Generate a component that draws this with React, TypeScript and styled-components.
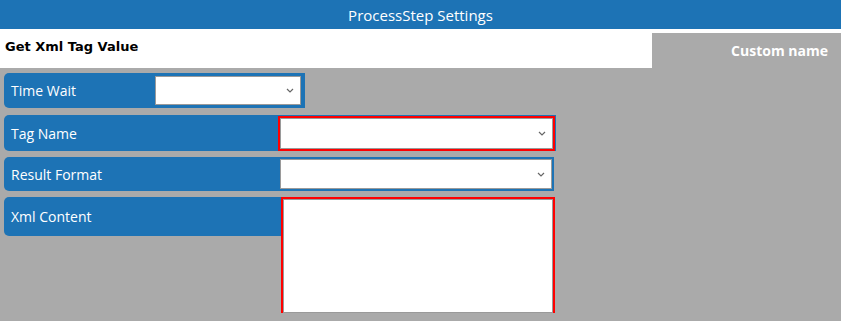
import React from 'react';
import styled, { createGlobalStyle, css } from 'styled-components';

const GlobalStyle = createGlobalStyle`
  html, body {
    margin: 0;
    padding: 0;
    background: #aaaaaa;
  }
  body {
    font-family: "Open Sans", "Noto Sans", Arial, sans-serif;
  }
`;

const BLUE = '#1d73b5';

const Header = styled.div`
  height: 29px;
  background: ${BLUE};
  color: #ffffff;
  font-size: 15px;
  display: flex;
  align-items: center;
  justify-content: center;
`;

const SubBar = styled.div`
  height: 39px;
  background: #ffffff;
  display: flex;
  justify-content: space-between;
`;

const StepTitle = styled.div`
  padding: 10px 0 0 5px;
  font-family: "DejaVu Sans", Verdana, sans-serif;
  font-weight: bold;
  font-size: 13px;
  color: #000000;
`;

const CustomName = styled.div`
  margin-top: 4px;
  width: 189px;
  background: #aaaaaa;
  color: #ffffff;
  font-weight: bold;
  font-size: 14px;
  display: flex;
  align-items: center;
  justify-content: flex-end;
  padding-right: 13px;
  box-sizing: border-box;
`;

const Form = styled.div`
  padding: 5px 0 0 4px;
  display: flex;
  flex-direction: column;
`;

const Row = styled.div<{ $gap: number }>`
  display: flex;
  align-items: flex-start;
  margin-bottom: ${(p) => p.$gap}px;
`;

const Label = styled.div<{ $width: number; $height: number }>`
  width: ${(p) => p.$width}px;
  height: ${(p) => p.$height}px;
  background: ${BLUE};
  border-radius: 5px 0 0 5px;
  color: #ffffff;
  font-size: 14px;
  display: flex;
  align-items: center;
  padding-left: 7px;
  box-sizing: border-box;
`;

const FieldCell = styled.div<{ $pad: string }>`
  background: ${BLUE};
  padding: ${(p) => p.$pad};
  display: flex;
`;

const invalid = css`
  outline: 2px solid #ff0000;
  outline-offset: 0;
`;

const Select = styled.div<{ $width: number; $height: number; $invalid?: boolean }>`
  width: ${(p) => p.$width}px;
  height: ${(p) => p.$height}px;
  background: #ffffff;
  border: 1px solid #9a9a9a;
  box-sizing: border-box;
  display: flex;
  align-items: center;
  justify-content: flex-end;
  padding-right: 6px;
  ${(p) => p.$invalid && invalid}
`;

const TextArea = styled.div`
  width: 270px;
  height: 114px;
  margin: 2px 0 0 2px;
  background: #ffffff;
  border: 1px solid #9a9a9a;
  box-sizing: border-box;
  ${invalid}
`;

const Chevron = () => (
  <svg width="8" height="5" viewBox="0 0 8 5">
    <path d="M1 1 L4 4 L7 1" fill="none" stroke="#666" strokeWidth="1.2" />
  </svg>
);

const App: React.FC = () => {
  return (
    <>
      <GlobalStyle />
      <Header>ProcessStep Settings</Header>
      <SubBar>
        <StepTitle>Get Xml Tag Value</StepTitle>
        <CustomName>Custom name</CustomName>
      </SubBar>
      <Form>
        <Row $gap={7}>
          <Label $width={151} $height={35}>Time Wait</Label>
          <FieldCell $pad="3px 4px 3px 0">
            <Select $width={146} $height={29}>
              <Chevron />
            </Select>
          </FieldCell>
        </Row>
        <Row $gap={6}>
          <Label $width={274} $height={36}>Tag Name</Label>
          <FieldCell $pad="3px 3px 2px 2px">
            <Select $width={273} $height={31} $invalid>
              <Chevron />
            </Select>
          </FieldCell>
        </Row>
        <Row $gap={6}>
          <Label $width={276} $height={34}>Result Format</Label>
          <FieldCell $pad="2px 2px 2px 0">
            <Select $width={272} $height={30}>
              <Chevron />
            </Select>
          </FieldCell>
        </Row>
        <Row $gap={0}>
          <Label $width={277} $height={39}>Xml Content</Label>
          <TextArea />
        </Row>
      </Form>
    </>
  );
};

export default App;
